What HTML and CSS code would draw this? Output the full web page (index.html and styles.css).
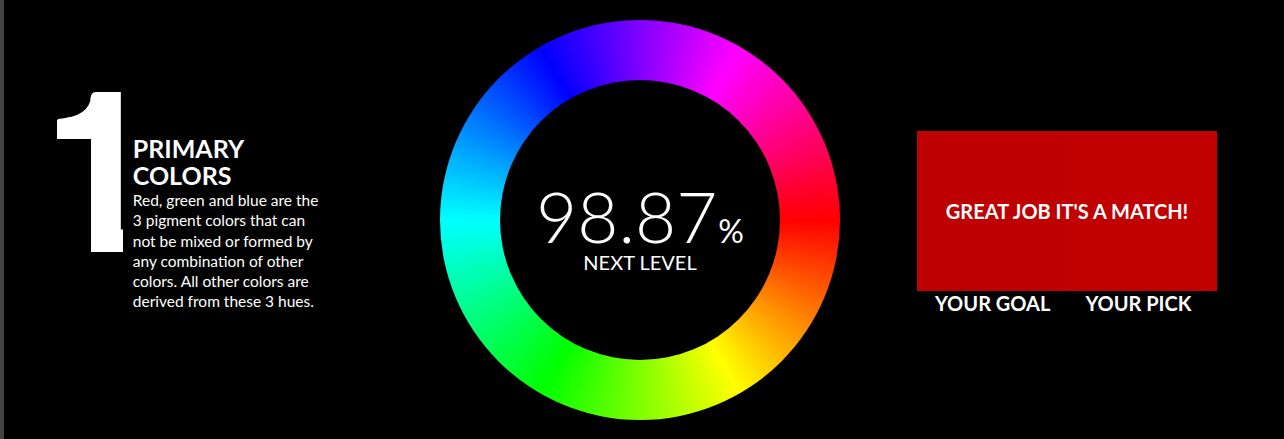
FILE: index.html
```html
<!DOCTYPE html>
<html lang="en">
<head>
<meta charset="utf-8">
<title>Primary Colors</title>
<link rel="stylesheet" href="styles.css">
</head>
<body>
<main class="stage">
  <section class="intro">
    <div class="level-num">1</div>
    <div class="intro-text">
      <h1 class="intro-title">PRIMARY<br>COLORS</h1>
      <p class="intro-copy">Red, green and blue are the 3 pigment colors that can not be mixed or formed by any combination of other colors. All other colors are derived from these 3 hues.</p>
    </div>
  </section>
  <section class="wheel">
    <div class="wheel-core">
      <div class="score"><span class="score-value">98.87</span><span class="score-unit">%</span></div>
      <div class="score-label">NEXT LEVEL</div>
    </div>
  </section>
  <section class="result">
    <div class="swatches">
      <div class="swatch swatch-goal"></div>
      <div class="swatch swatch-pick"></div>
      <div class="match-msg">GREAT JOB IT'S A MATCH!</div>
    </div>
    <div class="swatch-labels">
      <span class="swatch-label">YOUR GOAL</span>
      <span class="swatch-label">YOUR PICK</span>
    </div>
  </section>
</main>
</body>
</html>
```

FILE: styles.css
```css
html, body {
  margin: 0;
  padding: 0;
  height: 100%;
}

body {
  background: #000;
  color: #fff;
  font-family: "Lato", "Open Sans", sans-serif;
  border-left: 4px solid #444;
  box-sizing: border-box;
  overflow: hidden;
}

.stage {
  display: flex;
  align-items: flex-start;
  padding: 20px 0 0 26px;
}

.intro {
  flex: 0 0 410px;
  display: flex;
  align-items: flex-start;
  margin-top: 16px;
}

.level-num {
  font-size: 222px;
  font-weight: 900;
  line-height: 1.2;
  letter-spacing: -26px;
  -webkit-text-stroke: 6px #fff;
  clip-path: path("M27 83 Q60 81 61 60 Q62 56 66 56 L93 56 L93 216 L61 216 L61 103 L27 103 Z");
}

.intro-text {
  margin-top: 99px;
  width: 192px;
}

.intro-title {
  margin: 0;
  font-size: 25px;
  font-weight: 700;
  line-height: 27px;
}

.intro-copy {
  margin: 1px 0 0;
  font-size: 15.5px;
  font-weight: 400;
  line-height: 20.3px;
}

.wheel {
  flex: 0 0 400px;
  width: 400px;
  height: 400px;
  border-radius: 50%;
  background: conic-gradient(from 90deg, #f00, #ff0, #0f0, #0ff, #00f, #f0f, #f00);
  display: flex;
  align-items: center;
  justify-content: center;
}

.wheel-core {
  width: 280px;
  height: 280px;
  border-radius: 50%;
  background: #000;
  display: flex;
  flex-direction: column;
  align-items: center;
  justify-content: center;
  padding-top: 14px;
  box-sizing: border-box;
}

.score {
  line-height: 70px;
  height: 69px;
  white-space: nowrap;
}

.score-value {
  font-size: 71px;
  font-weight: 300;
}

.score-unit {
  font-size: 32px;
  font-weight: 400;
  margin-left: 1px;
}

.score-label {
  font-size: 20px;
  font-weight: 400;
  line-height: 24px;
}

.result {
  flex: 0 0 300px;
  margin-left: 77px;
  margin-top: 111px;
}

.swatches {
  position: relative;
  display: flex;
  height: 160px;
}

.swatch {
  flex: 1 1 0;
}

.swatch-goal {
  background: #bf0000;
}

.swatch-pick {
  background: #c10000;
}

.match-msg {
  position: absolute;
  inset: 0;
  display: flex;
  align-items: center;
  justify-content: center;
  font-size: 20px;
  font-weight: 700;
}

.swatch-labels {
  display: flex;
  gap: 35px;
  padding-left: 18px;
}

.swatch-label {
  font-size: 20px;
  font-weight: 700;
  line-height: 24px;
}
```
